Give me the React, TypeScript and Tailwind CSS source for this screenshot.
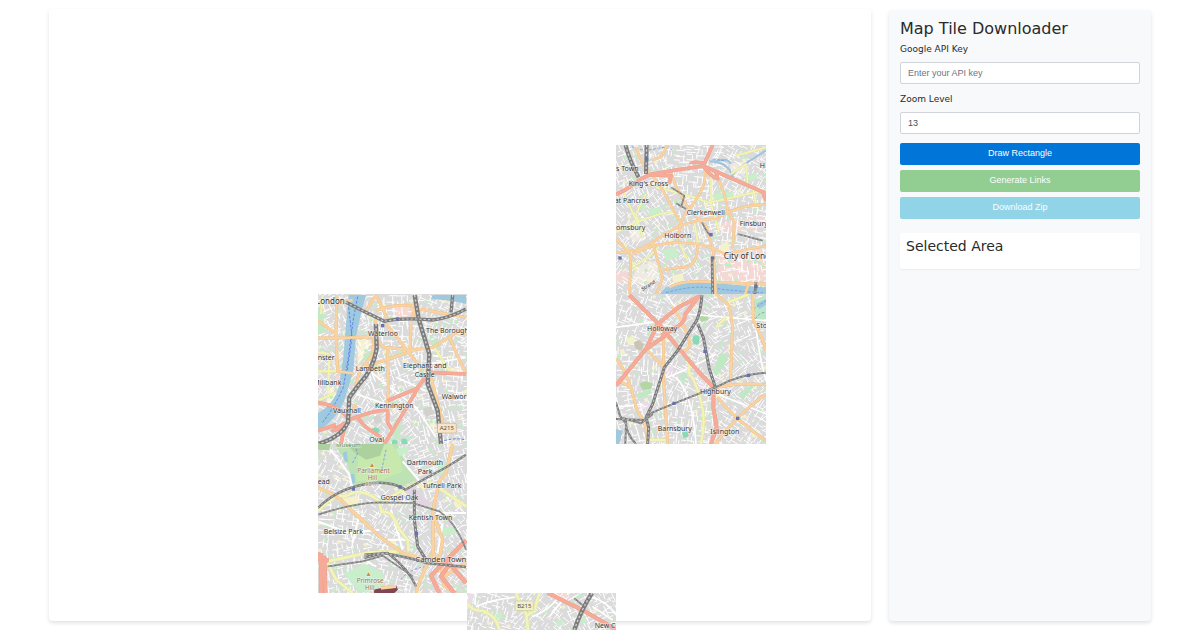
import { useMemo, useState } from 'react';
import type { FormEvent } from 'react';

type Kind = 'trunk' | 'orange' | 'yellow' | 'white' | 'rail' | 'water' | 'canal' | 'ferry';
type Line = [Kind, number, string];
type Area = [string, string];
type Label = [string, number, number, number?, string?];

interface TileData {
  id: string;
  place: string;
  box: [number, number, number, number];
  seed: number;
  tilt: number;
  districts: Area[];
  areas: Area[];
  lines: Line[];
  stations?: [number, number][];
  labels: Label[];
  shield?: { text: string; x: number; y: number; w: number; fill: string; stroke: string };
}

const COLORS: Record<Kind, string> = {
  trunk: '#f5ab98',
  orange: '#fad3a2',
  yellow: '#f3f5b6',
  white: '#ffffff',
  rail: '#7c7c7c',
  water: '#9fc9df',
  canal: '#9fc4dc',
  ferry: '#5f82ea',
};

const CASINGS: Partial<Record<Kind, string>> = {
  trunk: '#ea9a87',
  orange: '#ecbd86',
  yellow: '#dcdd9d',
};

const TILES: TileData[] = [
  {
    id: 'kings-cross',
    place: 'left-[567px] top-[136px] h-[150px] w-[150px]',
    box: [0, 3, 450, 450],
    seed: 11,
    tilt: -20,
    districts: [
      ['#eeeae2', 'M38 260 L78 250 L90 282 L50 296Z M60 370 L118 350 L140 385 L90 430 L50 410Z M340 60 L390 50 L400 80 L350 95Z'],
      ['#f3d9d5', 'M300 240 L450 215 L450 250 L320 268Z M300 320 L450 315 L450 410 L310 415Z M205 420 L270 415 L270 440 L205 440Z M0 380 L35 370 L35 420 L0 420Z'],
    ],
    areas: [
      ['#c8eecb', 'M140 320 L178 308 L190 338 L150 350Z M290 150 L350 142 L352 160 L296 170Z M96 196 L132 188 L140 210 L104 220Z M385 95 L420 88 L424 106 L390 112Z M70 175 L90 170 L88 200 L78 205Z'],
      ['#f4f1cd', 'M310 305 L335 288 L342 318 L318 330Z M168 395 L200 388 L204 410 L172 416Z M60 250 L84 244 L88 260 L64 266Z'],
      ['#9fc9df', 'M150 430 Q220 408 300 418 Q380 424 450 430 L450 456 L125 456Z'],
    ],
    lines: [
      ['canal', 6, 'M280 52 Q340 55 350 100 M350 92 Q366 70 450 20 M345 60 Q335 40 300 52'],
      ['ferry', 2, 'M48 8 Q80 24 120 14 T172 22 M150 446 Q220 426 270 430 Q360 442 440 446 M290 48 Q320 45 330 55'],
      ['yellow', 5, 'M0 265 Q90 215 180 200 M120 130 Q210 150 280 176 Q350 160 450 138 M285 78 L285 180 L310 265 M90 150 L60 210 L80 280 M360 35 L450 10 M235 235 L248 310 M45 370 Q90 350 125 312 M190 295 L215 350 M20 140 L70 250 M345 90 L390 60 L395 120 M410 130 L420 180 M25 300 L60 380'],
      ['orange', 6, 'M105 88 Q150 150 165 185 L195 240 L180 300 M165 85 Q180 140 220 195 L272 250 L285 300 M265 72 Q280 120 220 195 M300 90 Q330 150 335 200 L355 235 L350 310 M0 325 Q70 325 110 295 Q200 225 300 225 Q370 180 450 182 M50 330 Q130 290 210 297 Q280 300 325 330 L450 305 M110 295 Q130 370 140 400 L120 456 M110 48 L135 40 L155 3 M60 10 L75 50 L100 85 M0 285 L45 335 L40 456 M140 378 Q180 370 205 370 Q240 370 246 305 M160 430 Q200 405 300 415 L450 420 M215 195 L190 245 M290 300 L300 456 M385 456 L398 420'],
      ['trunk', 9, 'M0 152 Q45 130 75 105 L100 92 L180 78 L262 66 L450 148 M262 66 L290 3 M262 66 Q285 100 305 104 L300 84 M225 60 Q225 52 262 56 M440 145 L450 170 M100 92 L165 95 L160 118'],
      ['rail', 12, 'M28 3 Q45 60 68 100 M92 3 L90 90'],
      ['rail', 5, 'M180 178 L210 195 M165 130 L205 155 L195 190 M258 235 Q275 270 285 275 M365 270 L440 290'],
      ['rail', 8, 'M288 340 L290 450 M420 414 L416 456'],
    ],
    stations: [[285, 272], [290, 342], [12, 342], [92, 45], [420, 428]],
    labels: [
      ['s Town', 0, 82], ["King's Cross", 38, 125], ['at Pancras', -4, 178], ['omsbury', 0, 257],
      ['Clerkenwell', 212, 214], ['Holborn', 145, 281], ['Finsbury', 371, 245], ['City of London', 323, 346, 25],
      ['H', 431, 71],
    ],
  },
  {
    id: 'holloway',
    place: 'left-[567px] top-[285px] h-[150px] w-[150px]',
    box: [0, 0, 450, 450],
    seed: 23,
    tilt: 20,
    districts: [
      ['#ebdce9', 'M70 330 L110 310 L115 345 L80 365Z M145 225 L170 215 L175 235 L148 248Z M245 270 L265 262 L270 290 L250 296Z'],
    ],
    areas: [
      ['#bfe9c3', 'M312 178 L338 182 L328 210 L300 248 L292 228Z M62 300 L105 286 L108 298 L66 314Z M370 300 L408 270 L412 280 L378 320Z M192 245 L210 235 L218 250 L198 258Z'],
      ['#b2d6a4', 'M70 270 Q85 256 110 268 L106 284 L80 288Z M250 68 L275 60 L276 78 L255 84Z'],
      ['#bde7c5', 'M408 20 L450 3 L450 75 L425 90Z'],
      ['#86dbb6', 'M230 128 Q240 118 250 128 V148 Q240 156 230 148Z M198 416 L214 410 L218 428 L202 432Z'],
      ['#cac5b5', 'M52 145 L70 138 L84 152 L76 170 L60 166Z'],
      ['#f4f1cd', 'M28 135 L52 124 L58 144 L38 154Z M295 295 L315 290 L316 310 L300 312Z M405 415 L420 408 L425 425 L410 432Z M10 168 L24 164 L26 176 L14 178Z'],
      ['#9fc9df', 'M420 30 L450 15 L450 32 L430 45Z M0 405 L20 410 L10 450 L0 450Z'],
    ],
    lines: [
      ['white', 5, 'M0 100 L130 82 M150 0 Q200 70 210 120 M155 250 Q250 210 300 180 M420 100 Q430 190 450 260 M0 340 L80 330 M180 250 Q230 300 240 450 M210 60 L450 80 M305 300 L450 360'],
      ['ferry', 2, 'M412 45 L450 20 M418 75 Q430 55 450 55'],
      ['yellow', 7, 'M222 200 L218 235 Q245 270 260 345 Q268 400 254 450 M335 26 L400 0 M95 438 H155 M300 100 L330 70'],
      ['orange', 7, 'M143 125 L142 250 L155 450 M300 0 L340 36 L350 100 L343 270 M410 0 L412 80 Q440 130 450 170 M90 165 L145 222 M168 38 Q200 75 220 140 L222 158 L195 178 M0 195 Q40 240 60 340 L90 400 L95 450 M0 260 Q40 270 50 290 M305 280 Q370 265 450 272 M305 310 Q350 370 450 440 M450 300 Q365 360 298 450'],
      ['trunk', 10, 'M40 3 L130 92 L240 225 L295 282 M0 275 L90 165 L125 90 L190 38 L248 8 L205 65 M90 165 L148 125 M205 65 Q215 88 135 125 M293 280 L292 340 L302 400 L285 450'],
      ['rail', 9, 'M258 3 Q252 70 235 90 L185 170 L145 220 L110 330 L90 370 L98 400 L95 450 M245 90 L262 130 L280 225 L300 285'],
      ['rail', 6, 'M450 236 Q370 242 310 275 L175 328 L110 355 L85 378 L0 375 M0 325 L12 365 L30 390 L28 450 M20 372 L75 388 L110 360 M60 450 Q30 420 30 380'],
    ],
    stations: [[267, 172], [174, 328], [397, 244], [365, 373]],
    labels: [['Holloway', 93, 110], ['Highbury', 252, 299], ['Barnsbury', 125, 411], ['Islington', 283, 419], ['Stoke', 421, 101]],
  },
  {
    id: 'lambeth',
    place: 'left-[269px] top-[285px] h-[150px] w-[149px]',
    box: [6, 0, 447, 450],
    seed: 37,
    tilt: -25,
    districts: [
      ['#f6f1d4', 'M125 138 H165 L155 170 L125 215Z M35 285 L55 278 L50 320 L30 330Z M400 220 L430 225 L422 245 L398 238Z M340 380 H362 V400 H342Z'],
      ['#f7d8d2', 'M230 40 L280 30 L285 65 L235 70Z M60 245 L80 250 L72 275 L58 270Z'],
    ],
    areas: [
      ['#9fc9df', 'M98 3 H150 Q130 75 120 130 L112 230 L85 320 Q60 380 6 410 V358 Q55 330 68 280 L82 190 Q90 90 98 3Z M350 3 H450 V30 L430 25 Q390 18 345 15Z'],
      ['#c4e9c6', 'M6 40 L20 55 L28 115 L6 122Z M235 400 L262 390 L250 430 L230 450Z M345 140 L365 132 L375 160 L350 165Z M142 180 L168 170 L170 190 L144 200Z M300 235 L322 225 L325 245 L305 250Z'],
      ['#86dbb6', 'M168 405 Q178 395 190 405 V415 Q178 425 168 415Z M228 440 Q236 434 244 440 V450 H228Z M256 436 Q266 430 274 438 V450 H256Z'],
      ['#d2d2cc', 'M170 370 L190 362 L200 380 L180 390Z M320 345 L345 335 L355 360 L330 368Z'],
    ],
    lines: [
      ['white', 5, 'M160 230 Q220 280 300 340 M240 250 L330 290 M120 300 L210 330 M300 340 L360 430 M340 210 L450 190'],
      ['ferry', 3, 'M125 8 L112 75 L97 190 L82 280 Q55 340 20 385 M98 40 L108 130 L92 240 M385 440 Q420 430 450 438'],
      ['yellow', 6, 'M6 232 L62 232 M40 190 L36 290 M355 160 L400 230 M20 3 L15 60 M6 175 L40 180 M6 320 L60 295'],
      ['orange', 7, 'M6 132 H85 L170 128 M62 3 L60 120 L65 235 M65 232 L112 238 M210 90 L235 120 L290 190 L318 228 M170 128 L205 160 L290 168 L350 160 Q400 130 430 110 L450 120 M215 160 L217 290 L212 350 M180 50 Q230 30 290 35 L310 85 M180 3 L215 75 M130 225 L218 195 L290 170 M285 90 L282 165 M345 200 L330 240 M345 250 L385 400 M150 50 L180 3 M180 70 L170 180 L130 235 L115 290 M65 30 L110 18 M310 45 L450 70 M400 130 L450 240 M300 3 L290 80 M6 80 L60 120 M120 330 L100 365'],
      ['trunk', 9, 'M6 325 Q60 335 90 365 L100 380 L50 410 L85 400 L75 450 M105 375 Q170 350 215 348 L215 385 L230 410 L325 250 L338 235 L450 240 M230 410 L205 450 M125 372 L150 400 L195 430 M215 320 L300 285 L330 250 M6 410 L60 392'],
      ['rail', 13, 'M180 90 L182 165 Q170 230 130 270 L100 310 L96 385 Q75 430 6 450 M296 3 L308 75 L340 180 L335 270 L365 350 L375 450'],
      ['rail', 10, 'M90 25 L140 50 L205 82 Q260 70 350 78 Q400 72 450 45 M410 3 L405 55'],
    ],
    stations: [[245, 75], [200, 95]],
    labels: [
      ['London', 0, 30, 24], ['Waterloo', 156, 127], ['The Borough', 330, 116], ['nster', 5, 197], ['Lambeth', 119, 231],
      ['Elephant and', 261, 221], ['Castle', 296, 248], ['Millbank', -8, 273], ['Kennington', 177, 342],
      ['Walworth', 377, 314], ['Vauxhall', 51, 357], ['Oval', 160, 445],
    ],
    shield: { text: 'A215', x: 364, y: 388, w: 57, fill: '#f7e4cb', stroke: '#cbb28f' },
  },
  {
    id: 'camden',
    place: 'left-[269px] top-[435px] h-[149px] w-[149px]',
    box: [6, 3, 447, 447],
    seed: 41,
    tilt: 25,
    districts: [
      ['#ebdce9', 'M395 340 L430 345 L428 370 L400 372Z'],
    ],
    areas: [
      ['#bde3b4', 'M55 3 H245 L270 62 L302 112 L250 132 L180 122 L110 128 L95 65Z'],
      ['#c7e9ae', 'M130 20 L225 3 L250 30 L260 85 L200 110 L120 115Z'],
      ['#acd19e', 'M90 3 H205 L192 38 L150 50 L115 28Z M6 3 H45 L38 22 L6 20Z'],
      ['#c8eecb', 'M82 392 L145 362 L205 392 L198 430 L150 450 L125 440Z M365 65 L400 55 L390 90 L368 95Z M240 18 L275 8 L278 30 L250 40Z M375 255 L420 250 L425 270 L380 280Z'],
      ['#e2d5e2', 'M275 132 L310 142 L350 195 L300 190 L280 170Z'],
      ['#f4f1cd', 'M80 165 L125 160 L132 178 L110 190 L88 186Z M412 180 L430 170 L438 192 L420 196Z M222 292 L240 288 L240 302 L224 302Z'],
      ['#9fc9df', 'M80 30 L92 25 L96 58 L86 55Z M100 95 L114 92 L118 118 L108 125Z'],
      ['#7d4650', 'M172 440 L240 426 L246 440 L235 450 H175Z'],
    ],
    lines: [
      ['white', 6, 'M42 20 L68 50 L100 95 L108 130 M260 55 L320 125 M148 330 Q150 360 180 370 M6 235 L100 270 L190 260 M225 200 L260 320 M130 215 L110 300 M360 210 H450 M380 240 L365 330 M215 290 H265'],
      ['ferry', 2, 'M110 60 L125 30 L115 3 M210 20 L195 90 M255 410 Q275 380 330 370'],
      ['yellow', 8, 'M80 165 Q115 140 145 150 Q180 160 192 180 L195 205 L220 210 Q240 230 250 260 L275 290 L278 325 M192 180 Q250 145 305 118 L325 140 M6 205 Q50 150 90 160 M35 355 L160 328 L250 325 L300 340 M340 115 L450 190 M35 360 L60 410 L110 450'],
      ['orange', 8, 'M6 135 Q60 150 100 195 L190 280 L260 330 L310 345 M410 3 L390 90 L370 115 L350 205 L352 330 L395 400 M350 330 Q310 410 300 450 M370 340 L385 430 L420 450 M195 435 L240 430 M380 400 L450 360 M350 210 L380 290 L370 350'],
      ['trunk', 11, 'M450 292 L345 398 L370 450 M15 330 V450 M6 352 L25 345 L28 450 M6 330 L20 350 L38 352 M400 365 L375 400 L415 450 M390 350 L450 420'],
      ['rail', 7, 'M6 195 Q70 130 175 120 Q230 115 268 140 L340 100 Q400 70 450 35 M145 335 L215 330 Q280 380 300 430 M145 345 L200 330 Q290 345 330 360 L450 372'],
      ['rail', 9, 'M295 140 L295 230 L305 310 L330 350'],
      ['rail', 5, 'M6 215 Q110 180 190 178 L290 180 L370 205 Q420 240 450 320 M35 370 L140 355 L200 338 L290 400'],
    ],
    stations: [[112, 138], [252, 132], [301, 272]],
    labels: [
      ['Museum', 60, 11, 18, '#5b8a55'], ['Parliament', 124, 90, 19, '#9a7050'], ['Hill', 155, 110, 19, '#9a7050'],
      ['98 m', 148, 130, 17, '#b07a4c'], ['▲', 158, 73, 20, '#d08f30'], ['ead', 5, 123],
      ['Dartmouth', 272, 66], ['Park', 305, 93], ['Tufnell Park', 320, 134], ['Gospel Oak', 194, 171],
      ['Kentish Town', 278, 230], ['Belsize Park', 23, 273], ['Camden Town', 298, 357, 23],
      ['▲', 148, 400, 20, '#d08f30'], ['Primrose', 122, 420, 19, '#9a7050'], ['Hill', 147, 441, 19, '#9a7050'],
    ],
  },
  {
    id: 'new-cross',
    place: 'left-[418px] top-[584px] h-[150px] w-[149px]',
    box: [3, 9, 447, 450],
    seed: 59,
    tilt: 15,
    districts: [
      ['#ebdce9', 'M3 9 H28 V40 L3 45Z'],
      ['#f7d8d2', 'M255 9 H310 L300 35 L270 25Z'],
    ],
    areas: [
      ['#c8eecb', 'M90 72 L108 65 L108 84 L92 88Z M270 92 L290 88 L290 105 L272 108Z M345 82 L360 78 V98 L348 100Z M230 60 L245 56 V70 L234 72Z'],
    ],
    lines: [
      ['white', 5, 'M28 9 V45 M30 50 Q70 30 145 22 M200 80 Q250 60 275 25 M370 20 Q420 30 450 75 M380 50 L440 90 M290 30 L250 80'],
      ['yellow', 8, 'M3 40 Q20 65 50 62 Q90 75 100 120 M150 9 Q160 40 180 70 L188 130 M220 9 L205 60 L180 80'],
      ['trunk', 10, 'M245 9 L345 58 L450 118'],
      ['rail', 13, 'M378 9 Q345 60 325 120'],
      ['rail', 5, 'M325 25 L355 50'],
    ],
    labels: [['New Cross', 386, 113, 21]],
    shield: { text: 'B215', x: 147, y: 33, w: 56, fill: '#f0f0cd', stroke: '#c5c590' },
  },
];

// side streets: short strokes on a tilted grid, always the same for a seed
function sideStreets(seed: number, tilt: number) {
  let s = seed;
  const next = () => {
    s = (s * 1103515245 + 12345) % 2147483648;
    return s / 2147483648;
  };
  const strokes: string[] = [];
  const greens: string[] = [];
  const schools: string[] = [];
  for (let y = 0; y < 460; y += 15) {
    for (let x = 0; x < 460; x += 15) {
      const region = Math.floor(x / 150) * 24 - Math.floor(y / 150) * 18;
      const turn = next() > 0.5 ? 90 : 0;
      const a = ((tilt + region + turn) * Math.PI) / 180;
      const len = 9 + next() * 22;
      const px = x + next() * 10;
      const py = y + next() * 10;
      const dx = Math.cos(a) * len;
      const dy = Math.sin(a) * len;
      strokes.push(`M${px.toFixed(1)} ${py.toFixed(1)}l${dx.toFixed(1)} ${dy.toFixed(1)}`);
      const kind = next();
      const block = `M${px.toFixed(1)} ${py.toFixed(1)}l9 -4 4 8 -9 4z`;
      if (kind > 0.93) greens.push(block);
      else if (kind > 0.89) schools.push(block);
    }
  }
  return { strokes: strokes.join(''), greens: greens.join(''), schools: schools.join('') };
}

function MapTile({ tile }: { tile: TileData }) {
  const streets = useMemo(() => sideStreets(tile.seed, tile.tilt), [tile.seed, tile.tilt]);
  const { shield } = tile;

  return (
    <svg
      viewBox={tile.box.join(' ')}
      preserveAspectRatio="none"
      className={`absolute max-w-none overflow-hidden ${tile.place}`}
    >
      <rect x="0" y="0" width="460" height="460" fill="#dcdbdb" />
      {tile.districts.map(([fill, d]) => (
        <path key={d} d={d} fill={fill} />
      ))}
      <path d={streets.strokes} stroke="#ffffff" strokeWidth="3" fill="none" />
      <path d={streets.greens} fill="#c2ecc4" />
      <path d={streets.schools} fill="#f4f1cd" />
      {tile.areas.map(([fill, d]) => (
        <path key={d} d={d} fill={fill} />
      ))}
      {tile.lines.map(([kind, width, d]) => (
        <g key={d} fill="none" strokeLinejoin="round">
          {CASINGS[kind] && <path d={d} stroke={CASINGS[kind]} strokeWidth={width + 2} />}
          <path
            d={d}
            stroke={COLORS[kind]}
            strokeWidth={width}
            strokeDasharray={kind === 'ferry' ? '8 5' : undefined}
          />
          {kind === 'rail' && (
            <path d={d} stroke="#cccccc" strokeWidth={width / 3} strokeDasharray="7 6" />
          )}
        </g>
      ))}
      {tile.stations?.map(([x, y]) => (
        <rect key={`${x}-${y}`} x={x - 5} y={y - 5} width="10" height="10" fill="#6672ac" />
      ))}
      {tile.id === 'kings-cross' && (
        <text
          x="80"
          y="441"
          fontSize="15"
          fill="#4a4034"
          transform="rotate(-32 80 441)"
          className="font-['Noto_Sans',sans-serif]"
        >
          Strand
        </text>
      )}
      <g
        className="font-['Noto_Sans',sans-serif]"
        stroke="#ffffff"
        strokeOpacity="0.65"
        strokeWidth="3"
        paintOrder="stroke"
      >
        {tile.labels.map(([text, x, y, size = 21, fill = '#333333']) => (
          <text key={`${text}-${y}`} x={x} y={y} fontSize={size} fill={fill}>
            {text}
          </text>
        ))}
      </g>
      {shield && (
        <g>
          <rect
            x={shield.x}
            y={shield.y}
            width={shield.w}
            height="29"
            rx="4"
            fill={shield.fill}
            stroke={shield.stroke}
            strokeWidth="2"
          />
          <text
            x={shield.x + shield.w / 2}
            y={shield.y + 21}
            textAnchor="middle"
            fontSize="18"
            fill="#554f42"
            className="font-['Noto_Sans',sans-serif]"
          >
            {shield.text}
          </text>
        </g>
      )}
    </svg>
  );
}

const labelClass = 'mb-0.5 block text-[9px] leading-[21px]';
const inputClass =
  "block h-[22px] w-full rounded-xs border border-[#ced4da] bg-white px-[7px] font-['Liberation_Sans',sans-serif] text-[9px] text-[#495057] outline-none placeholder:text-[#6c757d] focus:border-[#80bdff]";
const buttonClass =
  "h-[22px] w-full rounded-xs font-['Liberation_Sans',sans-serif] text-[9px] text-white";

export default function App() {
  const [apiKey, setApiKey] = useState('');
  const [zoom, setZoom] = useState('13');

  const onSubmit = (e: FormEvent) => e.preventDefault();

  return (
    <div className="flex h-screen gap-[18px] overflow-hidden bg-white px-[49px] pt-[10px] pb-[9px] font-['DejaVu_Sans',sans-serif] text-[#292b2c]">
      <main className="relative -mt-px min-w-0 flex-1 rounded-sm bg-white shadow-[0_2px_4px_rgba(0,0,0,0.12)]">
        {TILES.map((tile) => (
          <MapTile key={tile.id} tile={tile} />
        ))}
      </main>

      <aside className="w-[262px] shrink-0 rounded-sm bg-[#f8f9fa] px-[11px] pt-[9px] shadow-[0_2px_4px_rgba(0,0,0,0.12)]">
        <h1 className="text-base leading-5">Map Tile Downloader</h1>
        <form onSubmit={onSubmit}>
          <label htmlFor="api-key" className={labelClass}>
            Google API Key
          </label>
          <input
            id="api-key"
            type="text"
            placeholder="Enter your API key"
            value={apiKey}
            onChange={(e) => setApiKey(e.target.value)}
            className={inputClass}
          />
          <div className="mt-[5px]">
            <label htmlFor="zoom" className={labelClass}>
              Zoom Level
            </label>
            <input
              id="zoom"
              type="text"
              inputMode="numeric"
              value={zoom}
              onChange={(e) => setZoom(e.target.value)}
              className={inputClass}
            />
          </div>
          <div className="mt-[9px] flex flex-col gap-[5px]">
            <button type="button" className={`${buttonClass} bg-[#0275d8]`}>
              Draw Rectangle
            </button>
            <button type="button" disabled className={`${buttonClass} bg-[#5cb85c] opacity-65`}>
              Generate Links
            </button>
            <button type="button" disabled className={`${buttonClass} bg-[#5bc0de] opacity-65`}>
              Download Zip
            </button>
          </div>
        </form>
        <section className="mt-[14px] h-9 rounded-xs bg-white px-1.5 pt-1 shadow-[0_1px_2px_rgba(0,0,0,0.06)]">
          <h2 className="text-sm leading-[18px]">Selected Area</h2>
        </section>
      </aside>
    </div>
  );
}
